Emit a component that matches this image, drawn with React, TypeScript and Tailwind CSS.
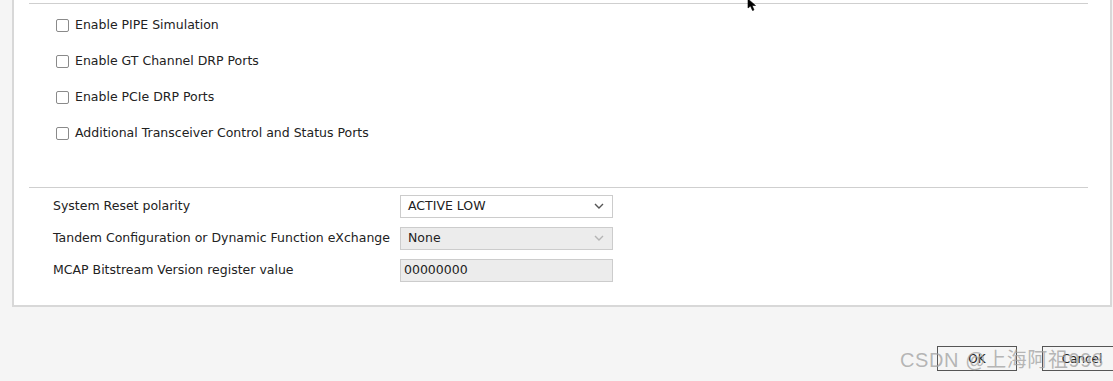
import React from "react";

const checkboxes = [
  "Enable PIPE Simulation",
  "Enable GT Channel DRP Ports",
  "Enable PCIe DRP Ports",
  "Additional Transceiver Control and Status Ports",
];

const Chevron = ({ muted }: { muted?: boolean }) => (
  <svg width="10" height="6" viewBox="0 0 10 6" className="mr-[8px]">
    <path
      d="M1 1 L5 5 L9 1"
      fill="none"
      stroke={muted ? "#b5b5b5" : "#555"}
      strokeWidth="1.4"
    />
  </svg>
);

const App: React.FC = () => {
  return (
    <div
      className="relative w-[1113px] h-[381px] overflow-hidden bg-[#f5f5f5] text-[12.5px] text-[#222]"
      style={{ fontFamily: '"DejaVu Sans", sans-serif' }}
    >
      {/* settings panel */}
      <div className="ml-[12px] w-[1100px] h-[307px] bg-white border-x-2 border-b-2 border-[#d8d8d8]">
        <div className="pl-[15px] pr-[22px] pt-[3px]">
          <div className="border-t border-[#cfcfcf]" />

          <div className="pt-[3px]">
            {checkboxes.map((label) => (
              <label key={label} className="flex items-center h-[36px] pl-[27px]">
                <span className="w-[13px] h-[13px] border border-[#8a8a8a] rounded-[2px] bg-white mr-[6px]" />
                <span>{label}</span>
              </label>
            ))}
          </div>

          <div className="mt-[36px] border-t border-[#cfcfcf]" />

          <div className="pt-[2px]">
            <div className="flex items-center h-[32px] pl-[24px]">
              <span className="w-[347px]">System Reset polarity</span>
              <div className="flex items-center justify-between w-[213px] h-[23px] border border-[#cccccc] bg-white pl-[7px]">
                <span>ACTIVE LOW</span>
                <Chevron />
              </div>
            </div>
            <div className="flex items-center h-[32px] pl-[24px]">
              <span className="w-[347px]">Tandem Configuration or Dynamic Function eXchange</span>
              <div className="flex items-center justify-between w-[213px] h-[23px] border border-[#cccccc] bg-[#ececec] pl-[7px]">
                <span>None</span>
                <Chevron muted />
              </div>
            </div>
            <div className="flex items-center h-[32px] pl-[24px]">
              <span className="w-[347px]">MCAP Bitstream Version register value</span>
              <div className="flex items-center w-[213px] h-[23px] border border-[#cccccc] bg-[#ececec] pl-[3px]">
                <span>00000000</span>
              </div>
            </div>
          </div>
        </div>
      </div>

      {/* dialog buttons */}
      <div className="flex mt-[39px] pl-[937px] gap-[25px]">
        <button className="shrink-0 w-[80px] h-[25px] border border-[#555] bg-[#f5f5f5] text-[12px] text-[#222]">
          OK
        </button>
        <button className="shrink-0 w-[80px] h-[25px] border border-[#555] bg-[#f5f5f5] text-[12px] text-[#222]">
          Cancel
        </button>
      </div>

      {/* watermark */}
      <div
        className="absolute left-[900px] top-[345px] text-[20px] tracking-[0.6px] text-[#a0a0a0]/75 whitespace-nowrap pointer-events-none"
        style={{ fontFamily: '"Liberation Sans", "Noto Sans CJK SC", sans-serif' }}
      >
        CSDN @上海阿祖998
      </div>

      {/* mouse cursor */}
      <svg className="absolute left-[747px] top-[-2px]" width="12" height="14" viewBox="0 0 12 14">
        <path d="M1 1 L1 10 L3.5 8 L5.5 12.5 L7 12 L5.2 7.5 L8.5 7.5 Z" fill="#000" stroke="#000" strokeWidth="0.6" />
      </svg>
    </div>
  );
};

export default App;
